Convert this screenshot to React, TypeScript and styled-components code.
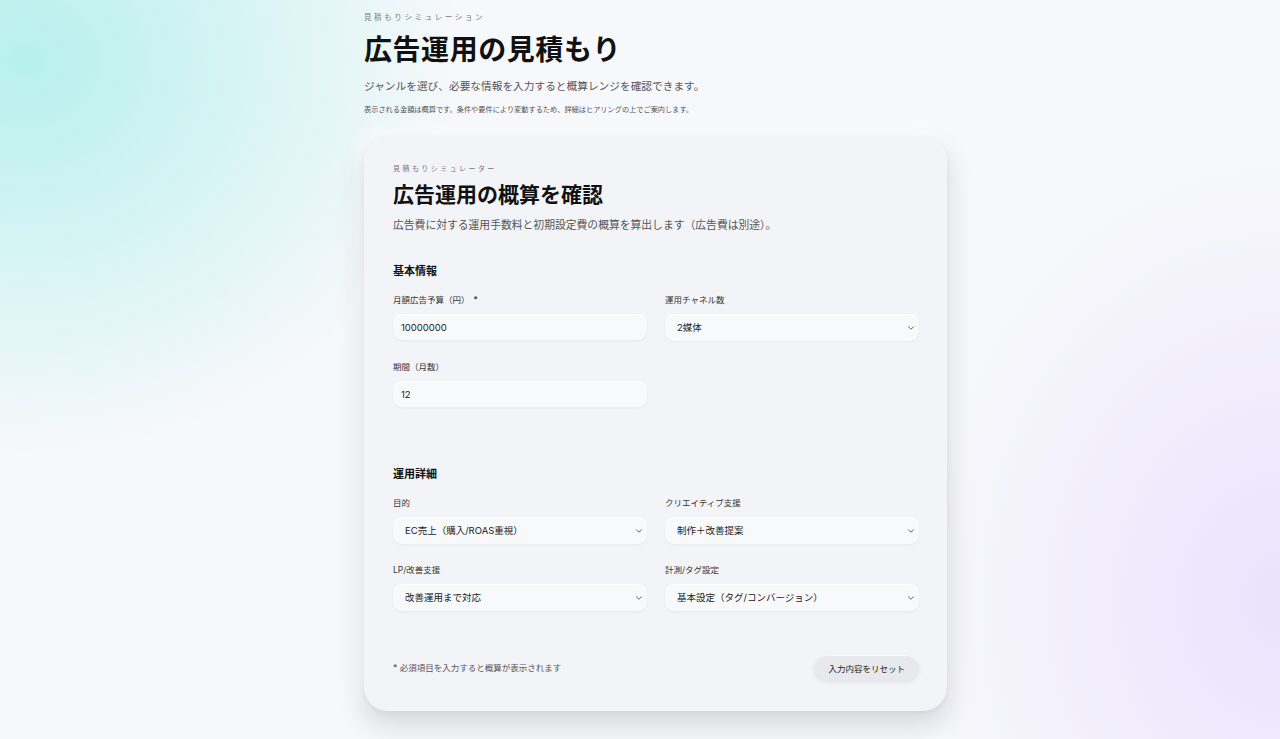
import { createGlobalStyle, styled } from "styled-components";
import type { FC } from "react";

const GlobalStyle = createGlobalStyle`
  html, body {
    margin: 0;
    padding: 0;
  }
  body {
    min-height: 739px;
    font-family: "Inter", "Noto Sans CJK JP", sans-serif;
    color: #111;
    background-color: #f7f8fb;
    background-image:
      radial-gradient(ellipse 440px 400px at 2% 8%, rgba(120, 232, 224, 0.5), rgba(120, 232, 224, 0) 100%),
      radial-gradient(ellipse 360px 440px at 100% 80%, rgba(214, 190, 255, 0.38), rgba(214, 190, 255, 0) 100%);
    background-repeat: no-repeat;
  }
`;

const Page = styled.div`
  min-height: 739px;
  padding: 13px 0 40px 364px;
  box-sizing: border-box;
`;

const Column = styled.main`
  width: 583px;
`;

// ページ見出し
const Eyebrow = styled.p<{ $size?: number }>`
  margin: 0;
  font-size: ${(p) => p.$size ?? 7.5}px;
  line-height: 10px;
  letter-spacing: 0.35em;
  color: #777;
`;

const PageTitle = styled.h1`
  margin: 10px 0 0;
  font-size: 28px;
  line-height: 34px;
  font-weight: 700;
  letter-spacing: 0.02em;
`;

const Lead = styled.p`
  margin: 11px 0 0;
  font-size: 10.7px;
  line-height: 18px;
  color: #555;
`;

const Note = styled.p`
  margin: 9px 0 0;
  font-size: 7.2px;
  line-height: 10px;
  color: #555;
`;

// カード
const Card = styled.section`
  margin-top: 21px;
  padding: 28px 28px 31px 29px;
  background: #f3f4f8;
  border-radius: 24px;
  box-shadow:
    0 14px 28px rgba(20, 24, 40, 0.14),
    0 2px 6px rgba(20, 24, 40, 0.05),
    -6px -6px 16px rgba(255, 255, 255, 0.9);
`;

const CardTitle = styled.h2`
  margin: 7px 0 0;
  font-size: 21px;
  line-height: 27px;
  font-weight: 700;
`;

const CardDesc = styled.p`
  margin: 9px 0 0;
  font-size: 10.8px;
  line-height: 18px;
  color: #555;
`;

const Section = styled.div<{ $gap: number }>`
  margin-top: ${(p) => p.$gap}px;
`;

const SectionTitle = styled.h3`
  margin: 0 0 15px;
  font-size: 11px;
  line-height: 16px;
  font-weight: 700;
`;

const Grid = styled.div`
  display: grid;
  grid-template-columns: 1fr 1fr;
  column-gap: 18px;
  row-gap: 20px;
`;

const Field = styled.label`
  display: flex;
  flex-direction: column;
  gap: 8px;
`;

const LabelText = styled.span`
  font-size: 8.5px;
  line-height: 12px;
  color: #333;
`;

const Required = styled.span`
  margin-left: 4px;
  color: #333;
`;

const controlBase = `
  box-sizing: border-box;
  width: 100%;
  border: none;
  outline: none;
  border-radius: 9px;
  background: #f8f9fb;
  box-shadow:
    0 1px 3px rgba(20, 24, 40, 0.05),
    inset 0 1px 0 rgba(255, 255, 255, 0.9);
  font-family: "Inter", "Noto Sans CJK JP", sans-serif;
  color: #222;
`;

const TextInput = styled.input`
  ${controlBase}
  height: 26px;
  padding: 0 8px;
  font-size: 9.5px;
`;

const SelectWrap = styled.div`
  position: relative;
`;

const Select = styled.select`
  ${controlBase}
  height: 27px;
  padding: 0 24px 0 12px;
  font-size: 9.5px;
  appearance: none;
  -webkit-appearance: none;
`;

const Chevron = styled.svg`
  position: absolute;
  right: 3px;
  top: 50%;
  width: 10px;
  height: 10px;
  transform: translateY(-50%);
  pointer-events: none;
`;

const Footer = styled.div`
  margin-top: 44px;
  display: flex;
  align-items: center;
  justify-content: space-between;
`;

const FooterNote = styled.p`
  margin: 0;
  font-size: 8.5px;
  line-height: 12px;
  color: #555;
`;

const ResetButton = styled.button`
  height: 25px;
  padding: 0 14px;
  border: none;
  border-radius: 999px;
  background: #e8e9ed;
  box-shadow:
    0 2px 4px rgba(20, 24, 40, 0.08),
    inset 0 1px 0 rgba(255, 255, 255, 0.7);
  font-family: "Inter", "Noto Sans CJK JP", sans-serif;
  font-size: 8.5px;
  color: #222;
  cursor: pointer;
`;

interface SelectFieldProps {
  label: string;
  value: string;
  options: string[];
}

const SelectField: FC<SelectFieldProps> = ({ label, value, options }) => (
  <Field>
    <LabelText>{label}</LabelText>
    <SelectWrap>
      <Select defaultValue={value}>
        {options.map((o) => (
          <option key={o} value={o}>
            {o}
          </option>
        ))}
      </Select>
      <Chevron viewBox="0 0 24 24" fill="none" stroke="#444" strokeWidth={2} strokeLinecap="round" strokeLinejoin="round">
        <path d="m6 9 6 6 6-6" />
      </Chevron>
    </SelectWrap>
  </Field>
);

function App() {
  return (
    <>
      <GlobalStyle />
      <Page>
        <Column>
          <Eyebrow>見積もりシミュレーション</Eyebrow>
          <PageTitle>広告運用の見積もり</PageTitle>
          <Lead>ジャンルを選び、必要な情報を入力すると概算レンジを確認できます。</Lead>
          <Note>表示される金額は概算です。条件や要件により変動するため、詳細はヒアリングの上でご案内します。</Note>

          <Card>
            <Eyebrow $size={7}>見積もりシミュレーター</Eyebrow>
            <CardTitle>広告運用の概算を確認</CardTitle>
            <CardDesc>広告費に対する運用手数料と初期設定費の概算を算出します（広告費は別途）。</CardDesc>

            <Section $gap={28}>
              <SectionTitle>基本情報</SectionTitle>
              <Grid>
                <Field>
                  <LabelText>
                    月額広告予算（円）<Required>*</Required>
                  </LabelText>
                  <TextInput defaultValue="10000000" />
                </Field>
                <SelectField label="運用チャネル数" value="2媒体" options={["1媒体", "2媒体", "3媒体以上"]} />
                <Field>
                  <LabelText>期間（月数）</LabelText>
                  <TextInput defaultValue="12" />
                </Field>
              </Grid>
            </Section>

            <Section $gap={59}>
              <SectionTitle>運用詳細</SectionTitle>
              <Grid>
                <SelectField
                  label="目的"
                  value="EC売上（購入/ROAS重視）"
                  options={["認知拡大", "リード獲得", "EC売上（購入/ROAS重視）"]}
                />
                <SelectField
                  label="クリエイティブ支援"
                  value="制作＋改善提案"
                  options={["なし", "制作のみ", "制作＋改善提案"]}
                />
                <SelectField
                  label="LP/改善支援"
                  value="改善運用まで対応"
                  options={["なし", "簡易提案", "改善運用まで対応"]}
                />
                <SelectField
                  label="計測/タグ設定"
                  value="基本設定（タグ/コンバージョン）"
                  options={["なし", "基本設定（タグ/コンバージョン）", "高度な計測設計"]}
                />
              </Grid>
            </Section>

            <Footer>
              <FooterNote>* 必須項目を入力すると概算が表示されます</FooterNote>
              <ResetButton type="button">入力内容をリセット</ResetButton>
            </Footer>
          </Card>
        </Column>
      </Page>
    </>
  );
}

export default App;
